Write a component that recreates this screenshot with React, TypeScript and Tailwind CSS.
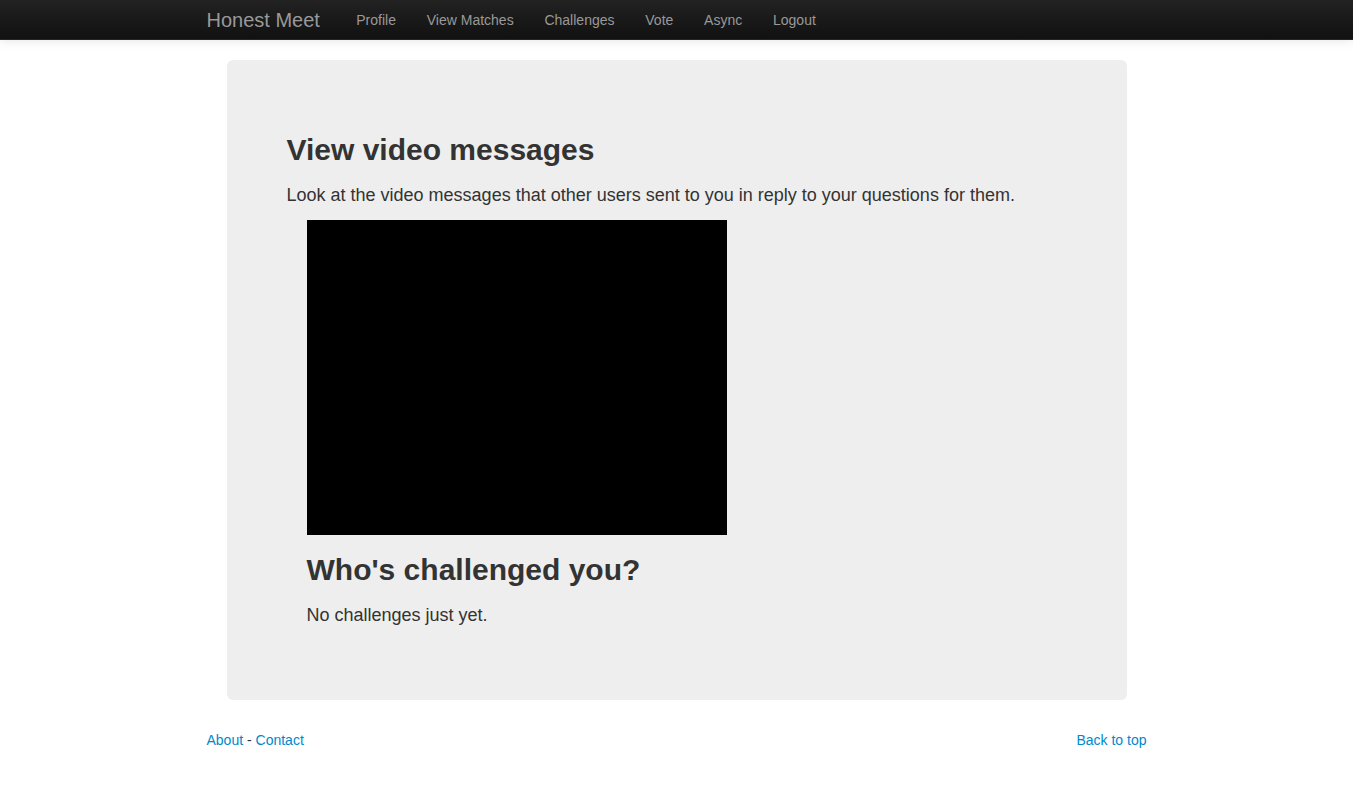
import React from "react";

const navLinks = ["Profile", "View Matches", "Challenges", "Vote", "Async", "Logout"];

export default function App() {
  return (
    <div className="min-h-screen bg-white text-[#333] text-[14px] leading-5 font-['Liberation_Sans',Arial,sans-serif]">
      <div className="h-10 bg-gradient-to-b from-[#222] to-[#111] border-b border-[#252525] shadow-[0_1px_10px_rgba(0,0,0,0.1)]">
        <div className="w-[940px] mx-auto flex items-center h-10">
          <a href="#" className="text-[20px] leading-5 text-[#999] pr-[21px] py-[10px]">
            Honest Meet
          </a>
          <ul className="flex">
            {navLinks.map((l) => (
              <li key={l}>
                <a href="#" className="block px-[15.4px] py-[10px] text-[#999] hover:text-white">
                  {l}
                </a>
              </li>
            ))}
          </ul>
        </div>
      </div>

      <div className="w-[940px] mx-auto pt-5">
        <div className="mx-5 bg-[#eee] rounded-md p-[60px] mb-[30px]">
          <h2 className="text-[30px] leading-10 font-bold my-[10px]">View video messages</h2>
          <p className="text-[18px] leading-[30px] mb-[10px]">
            Look at the video messages that other users sent to you in reply to your questions for them.
          </p>
          <div className="ml-5">
            <div className="leading-[20px]">
              <div className="inline-block align-baseline w-[420px] h-[315px] bg-black" />
            </div>
            <h2 className="text-[30px] leading-10 font-bold my-[10px]">Who's challenged you?</h2>
            <p className="text-[18px] leading-[30px] mb-[10px]">No challenges just yet.</p>
          </div>
        </div>

        <footer className="flex justify-between pb-10">
          <p>
            <a href="#" className="text-[#0088cc]">About</a> - <a href="#" className="text-[#0088cc]">Contact</a>
          </p>
          <a href="#" className="text-[#0088cc]">Back to top</a>
        </footer>
      </div>
    </div>
  );
}
